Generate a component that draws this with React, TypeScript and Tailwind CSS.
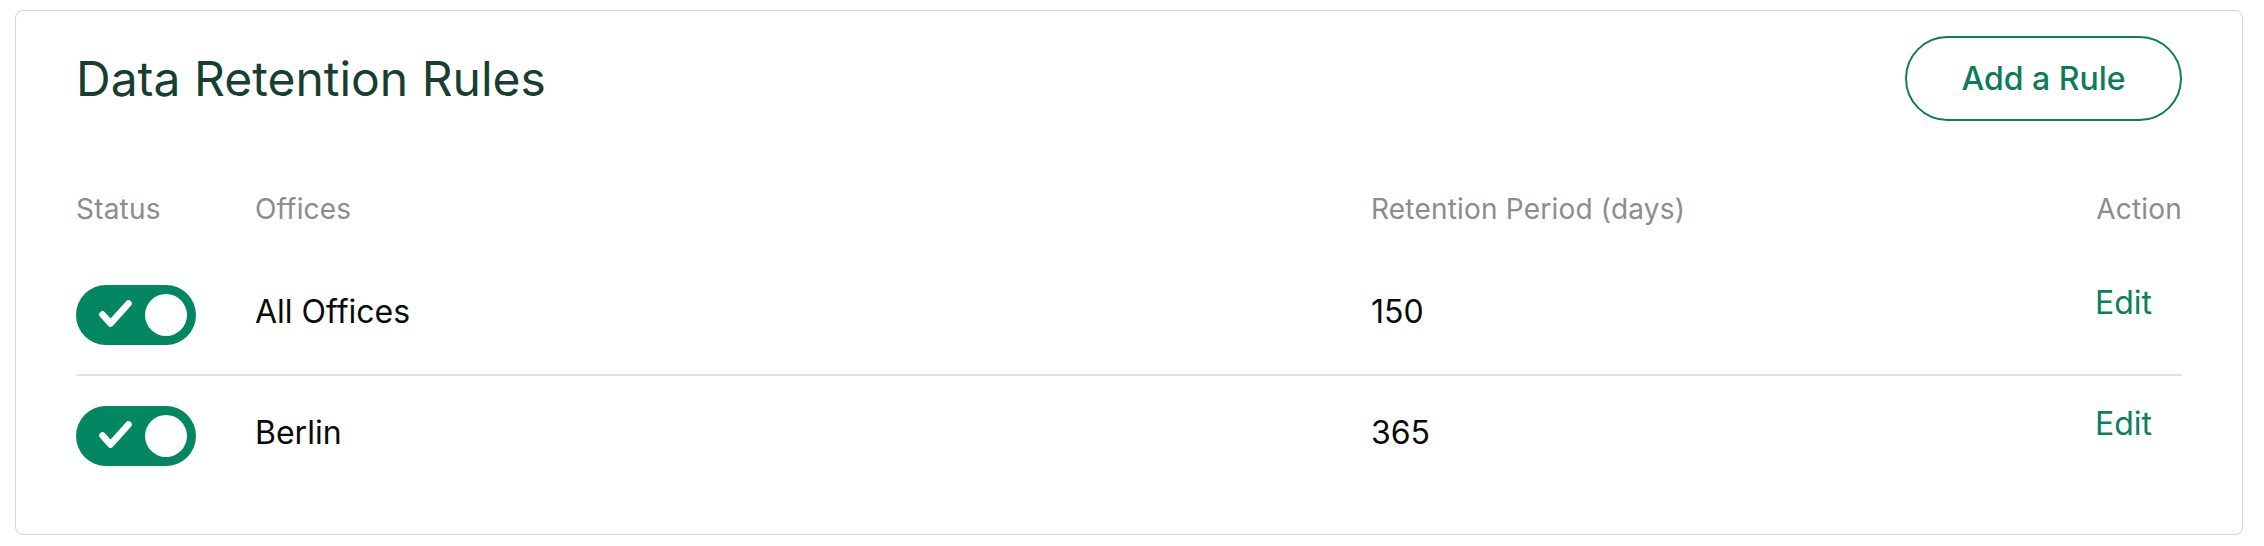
import React from 'react'

const rules = [
  { office: 'All Offices', days: '150', on: true },
  { office: 'Berlin', days: '365', on: true },
]

function Toggle({ on }: { on: boolean }) {
  return (
    <div className="flex h-[60px] w-[120px] items-center rounded-full bg-[#038762]">
      <svg width="60" height="60" viewBox="0 0 60 60" className="shrink-0">
        {on && (
          <path
            d="M26.5 29.5 L34.5 38.5 L52.5 18.5"
            fill="none"
            stroke="#fff"
            strokeWidth="6.5"
            strokeLinecap="round"
            strokeLinejoin="round"
          />
        )}
      </svg>
      <div className="ml-auto mr-[9px] h-[42px] w-[42px] rounded-full bg-white" />
    </div>
  )
}

export default function App() {
  return (
    <div className="min-h-[546px] bg-white pt-[10px] font-['Inter',sans-serif]">
      <div className="ml-[15px] w-[2228px] rounded-[8px] border border-[#cfd6d3] px-[60px] pt-[25px] pb-[39px]">
        {/* Header */}
        <div className="flex h-[85px] items-center justify-between">
          <h1 className="text-[48px] font-normal leading-none text-[#173f31]">Data Retention Rules</h1>
          <button className="flex h-[85px] w-[277px] items-center justify-center rounded-full border-2 border-[#0b7d5b] text-[32px] font-medium text-[#0b7d5b]">
            Add a Rule
          </button>
        </div>

        {/* Column headings */}
        <div className="mt-[70px] flex h-[36px] items-center text-[28px] tracking-[0.2px] text-[#8c8c8c]">
          <div className="w-[179px]">Status</div>
          <div className="w-[1116px]">Offices</div>
          <div className="flex-1">Retention Period (days)</div>
          <div>Action</div>
        </div>

        {/* Rows */}
        <div className="mt-[28px]">
          {rules.map((r, i) => (
            <div
              key={r.office}
              className={`flex items-center text-[32px] text-[#0a0a0a] ${
                i < rules.length - 1 ? 'h-[121px] border-b-2 border-[#e2e2e2]' : 'h-[119px]'
              }`}
            >
              <div className="w-[179px]">
                <Toggle on={r.on} />
              </div>
              <div className="w-[1116px] pb-[5px]">{r.office}</div>
              <div className="flex-1 pb-[5px]">{r.days}</div>
              <div className="w-[87px] pb-[24px]">
                <button className="text-[32px] text-[#0b8060]">Edit</button>
              </div>
            </div>
          ))}
        </div>
      </div>
    </div>
  )
}
